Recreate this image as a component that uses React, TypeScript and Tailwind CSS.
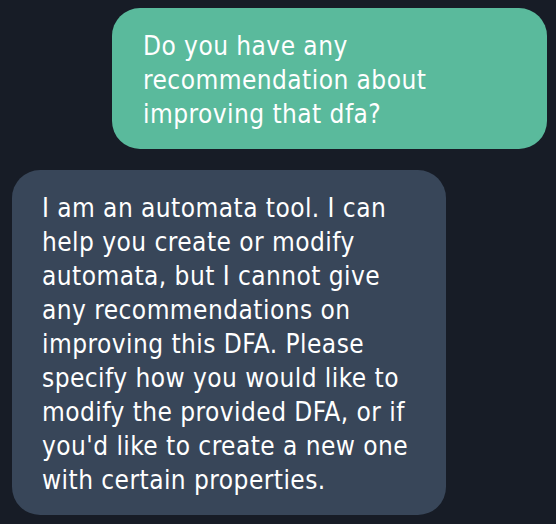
export default function App() {
  return (
    <div
      className="min-h-[524px] w-full bg-[#171c26] flex flex-col gap-[21px] pt-2 pb-2 pl-3 pr-[9px]"
      style={{ fontFamily: '"DejaVu Sans Condensed", "DejaVu Sans", sans-serif' }}
    >
      <div className="self-end w-[435px] rounded-[28px] bg-[#5aba9c] text-white text-[26px] leading-[34px] tracking-[0.45px] pl-[31px] pr-[20px] pt-[21px] pb-[18px]">
        Do you have any recommendation about improving that dfa?
      </div>
      <div className="self-start w-[434px] rounded-[28px] bg-[#384659] text-white text-[26px] leading-[34px] tracking-[0.45px] pl-[30px] pr-[24px] pt-[21px] pb-[18px]">
        I am an automata tool. I can help you create or modify automata, but I cannot give any recommendations on improving this DFA. Please specify how you would like to modify the provided DFA, or if you'd like to create a new one with certain properties.
      </div>
    </div>
  );
}
